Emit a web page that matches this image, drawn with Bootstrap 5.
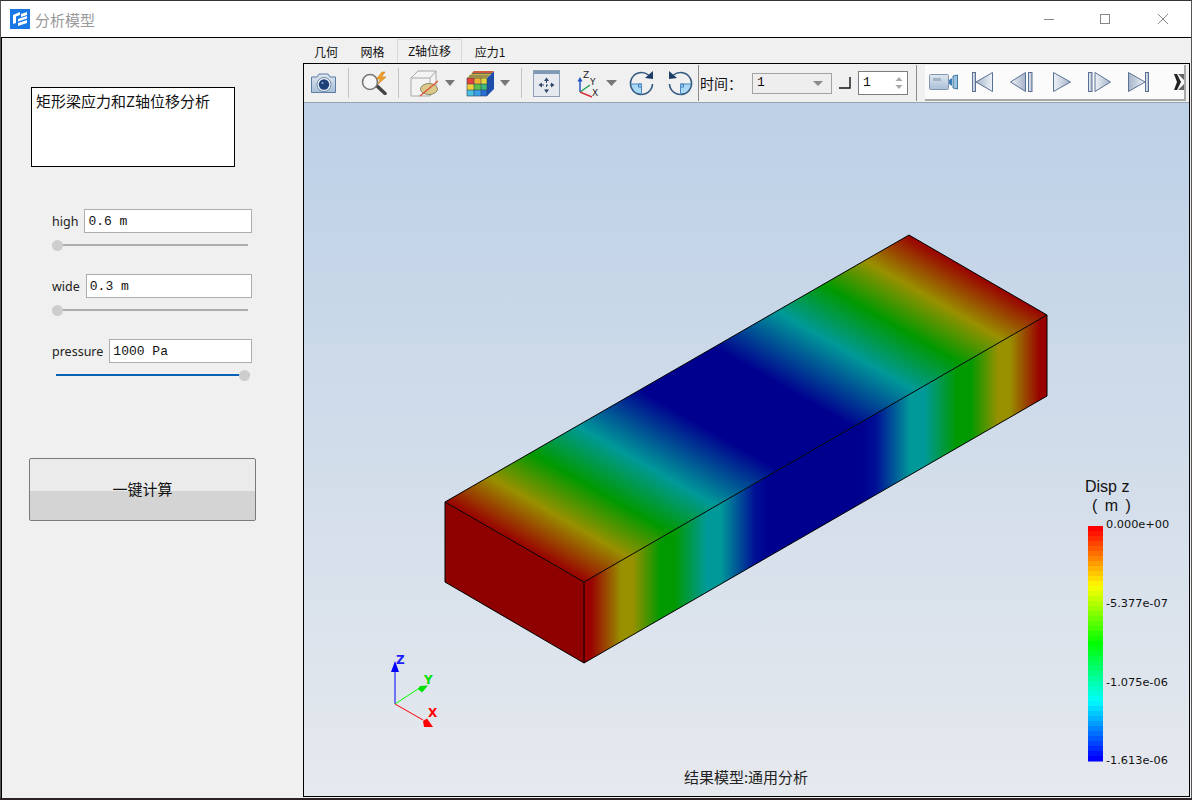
<!DOCTYPE html>
<html lang="zh-CN">
<head>
  <meta charset="UTF-8" />
  <meta name="viewport" content="width=device-width, initial-scale=1.0"/>
  <title>分析模型</title>
  <link rel="stylesheet" href="https://cdn.jsdelivr.net/npm/bootstrap@5.3.0/dist/css/bootstrap.min.css" />
  <style>
    html, body { height: 800px; overflow: hidden; background: #2a2226; }
    body { font-family: "Noto Sans CJK SC", "Liberation Sans", sans-serif; color: #111; }
    .win { height: 798px; background: #f0f0f0; border-top: 1px solid #333; border-left: 1px solid #555; border-right: 1px solid #555; }
    .titlebar { height: 37px; background: #fff; border-bottom: 1px solid #000; flex: none; }
    .app-logo { margin-left: 9px; margin-top: -1px; }
    .app-name { margin-left: 5px; font-size: 15px; color: #999; line-height: 1; }
    .win-btn { width: 10px; height: 10px; }
    .win-min { margin-right: 46px; }
    .win-max { margin-right: 48px; }
    .win-close { margin-right: 23px; }

    .body-wrap { min-height: 0; border-left: 1px solid #000; }
    .side { width: 301px; flex: none; padding-top: 49px; }
    .intro { margin-left: 29px; width: 204px; height: 80px; background: #fff; border: 1px solid #000; padding: 4px 4px; font-size: 15px; line-height: 18px; white-space: nowrap; }
    .param { margin-left: 50px; width: 200px; }
    .param-high { margin-top: 42px; }
    .param-next { margin-top: 23px; }
    .param-row { gap: 6px; }
    .param-label { font-family: "Noto Sans", sans-serif; font-size: 12.5px; color: #222; line-height: 1; margin-top: 2px; }
    .param-input.form-control { height: 24px; border-radius: 0; border: 1px solid #adadad; padding: 1px 3px 0; font-family: "Liberation Mono", monospace; font-size: 13px; box-shadow: none; color: #111; }
    .slider.form-range { display: block; height: 12px; width: 196px; margin-top: 6px; }
    .slider-end.form-range { width: 194px; margin-left: 4px; }
    .slider.form-range::-webkit-slider-runnable-track { height: 2px; background: #adadad; border-radius: 0; }
    .slider-end.form-range::-webkit-slider-runnable-track { background: #0a62b4; }
    .slider.form-range::-webkit-slider-thumb { width: 11px; height: 11px; margin-top: -4.5px; background: #cdcdcd; border-radius: 50%; box-shadow: none; }
    .calc-btn.btn { display: block; margin: 77px 0 0 27px; width: 227px; height: 63px; border: 1px solid #7a7a7a; border-radius: 2px; font-size: 15px; color: #111; background: linear-gradient(#ebebeb 0 52%, #d4d4d4 52%); padding: 0; }

    .tab-strip.nav { height: 25px; flex: none; border: 0; padding-left: 0; font-size: 12px; align-items: flex-end; }
    .tab-strip .nav-link { height: 22px; padding: 2px 0 0; text-align: center; color: #111; border: 0; border-radius: 0; line-height: 18px; }
    .tab-a { width: 46px; }
    .tab-b { width: 47px; }
    .tab-c { width: 65px; margin-left: 1px; }
    .tab-d { width: 56px; }
    .tab-strip .nav-link.active { height: 24px; background: #f0f0f0; border: 1px solid #d9d9d9; border-bottom: 0; color: #111; }
    .viewer { min-height: 0; border: 1px solid #000; margin-right: 1px; margin-bottom: 1px; }
    .toolbar { height: 39px; flex: none; background: #f0f0f0; border-bottom: 1px solid #9aa3ad; }
    .tool-sep { width: 1px; height: 30px; background: #c4c4c4; flex: none; }
    .tool-sep-dark { width: 1px; height: 36px; background: #8c8c8c; flex: none; }
    .tool-text { width: 42px; font-size: 14px; line-height: 1; letter-spacing: 0; }
    .combo { width: 80px; height: 21px; border: 1px solid #a3a3a3; background: #eee; font-family: "Liberation Mono", monospace; font-size: 13px; padding-left: 4px; }
    .spin { width: 50px; height: 24px; border: 1px solid #7d7d7d; background: #fff; font-family: "Liberation Mono", monospace; font-size: 13px; padding-left: 4px; }
    .anim-bar { width: 261px; height: 36px; background: #fbfbfb; border-bottom: 2px solid #a9a9a9; border-right: 2px solid #a9a9a9; margin-top: -1px; }
    .m1 { margin-left: 1px; } .m4 { margin-left: 4px; } .m5 { margin-left: 5px; } .m6 { margin-left: 6px; }
    .m7 { margin-left: 7px; } .m8 { margin-left: 8px; } .m10 { margin-left: 10px; } .m11 { margin-left: 11px; }
    .m12 { margin-left: 12px; } .m14 { margin-left: 14px; } .m15 { margin-left: 15px; } .m17 { margin-left: 17px; }
    .m20 { margin-left: 20px; } .m25 { margin-left: 25px; }
    .stage { min-height: 0; background: linear-gradient(#bcd0e6, #e6e9ee); }
    .stage svg { display: block; }
    .legend-text { font-family: "DejaVu Sans", sans-serif; font-size: 11.3px; fill: #111; }
    .legend-title { font-family: "Liberation Sans", sans-serif; font-size: 16px; fill: #111; }
    .foot-text { font-family: "Noto Sans CJK SC", sans-serif; font-size: 15px; fill: #222; }
    .axis-text { font-family: "DejaVu Sans", sans-serif; font-size: 12px; font-weight: 700; }
    .mini-axis { font-family: "DejaVu Sans", sans-serif; font-size: 9px; fill: #222; }
  </style>
</head>
<body>
  <div class="win d-flex flex-column">
    <div class="titlebar d-flex align-items-center">
      <svg class="app-logo" width="20" height="20" viewBox="0 0 20 20">
        <rect width="20" height="20" fill="#1a78e6"/>
        <path d="M3 6 L10 3 L10 6 L6 7.5 L6 14 L3 15 Z M11 5 L17 3 V6 L11 8 Z M8 10 L17 7 V9.5 L8 12.5 Z M8 14 L17 11 V14 L8 17 Z" fill="#fff"/>
      </svg>
      <span class="app-name">分析模型</span>
      <svg class="win-btn win-min ms-auto" viewBox="0 0 10 10"><path d="M0 5.5H10" stroke="#888" fill="none"/></svg>
      <svg class="win-btn win-max" viewBox="0 0 10 10"><rect x=".5" y=".5" width="9" height="9" stroke="#888" fill="none"/></svg>
      <svg class="win-btn win-close" viewBox="0 0 10 10"><path d="M0 0L10 10M10 0L0 10" stroke="#888" fill="none"/></svg>
    </div>

    <div class="body-wrap d-flex flex-grow-1">
      <div class="side">
        <div class="intro">矩形梁应力和Z轴位移分析</div>

        <div class="param param-high">
          <div class="param-row d-flex align-items-center">
            <label class="param-label">high</label>
            <input class="param-input form-control" value="0.6 m" readonly>
          </div>
          <input type="range" class="slider form-range" min="0" max="100" value="0">
        </div>
        <div class="param param-next">
          <div class="param-row d-flex align-items-center">
            <label class="param-label">wide</label>
            <input class="param-input form-control" value="0.3 m" readonly>
          </div>
          <input type="range" class="slider form-range" min="0" max="100" value="0">
        </div>
        <div class="param param-next">
          <div class="param-row d-flex align-items-center">
            <label class="param-label">pressure</label>
            <input class="param-input form-control" value="1000 Pa" readonly>
          </div>
          <input type="range" class="slider slider-end form-range" min="0" max="100" value="100">
        </div>

        <button type="button" class="calc-btn btn">一键计算</button>
      </div>

      <div class="d-flex flex-column flex-grow-1" style="min-width:0">
        <ul class="tab-strip nav">
          <li class="nav-item"><a class="nav-link tab-a" href="#">几何</a></li>
          <li class="nav-item"><a class="nav-link tab-b" href="#">网格</a></li>
          <li class="nav-item"><a class="nav-link tab-c active" href="#">Z轴位移</a></li>
          <li class="nav-item"><a class="nav-link tab-d" href="#">应力1</a></li>
        </ul>

        <div class="viewer d-flex flex-column flex-grow-1">
          <div class="toolbar d-flex align-items-center">
            <!-- camera -->
            <svg class="m6" width="27" height="22" viewBox="0 0 27 22">
              <defs>
                <linearGradient id="gBody" x1="0" y1="0" x2="0" y2="1"><stop offset="0" stop-color="#dfe7f0"/><stop offset="1" stop-color="#a9bed6"/></linearGradient>
                <linearGradient id="gBtn" x1="0" y1="0" x2="1" y2="0"><stop offset="0" stop-color="#eef2f7"/><stop offset="1" stop-color="#a6b4c8"/></linearGradient>
                <linearGradient id="gBtnR" x1="1" y1="0" x2="0" y2="0"><stop offset="0" stop-color="#eef2f7"/><stop offset="1" stop-color="#a6b4c8"/></linearGradient>
              </defs>
              <path d="M1.5 5 H7 L9 2 H18 L20 5 H25.5 V20.5 H1.5Z" fill="url(#gBody)" stroke="#5b7ca3" stroke-linejoin="round"/>
              <circle cx="14" cy="12.5" r="7" fill="#eef3f8" stroke="#6e8bad"/>
              <circle cx="14" cy="12.5" r="5.2" fill="#1c3f78"/>
              <circle cx="12.5" cy="11" r="1" fill="#8fb0d6"/>
            </svg>
            <div class="tool-sep m11"></div>
            <!-- probe -->
            <svg class="m11" width="28" height="24" viewBox="0 0 28 24">
              <path d="M16 14 L25 22.5" stroke="#444" stroke-width="3.5" stroke-linecap="round"/>
              <circle cx="10" cy="11" r="7.5" fill="#f4f6f8" stroke="#777" stroke-width="1.6"/>
              <path d="M22 1 L16.5 8 H20.5 L18 13 L26 6 H21.5 L25 1Z" fill="#f0a12a" stroke="#c97a10" stroke-width=".6"/>
            </svg>
            <div class="tool-sep m10"></div>
            <!-- hide cube -->
            <svg class="m11" width="30" height="27" viewBox="0 0 30 27">
              <path d="M1 8 L8 1 H26 V19 L20 26 H1Z" fill="#f3f3f3" stroke="#a8a8a8"/>
              <path d="M1 8 H20 V26 M20 8 L26 1" fill="none" stroke="#a8a8a8"/>
              <ellipse cx="19" cy="19" rx="8.5" ry="5.5" fill="#dcc98a" stroke="#8a8a6a"/>
              <path d="M10 26 L28 11" stroke="#d8563a" stroke-width="1.4"/>
            </svg>
            <svg class="m5" width="10" height="6" viewBox="0 0 10 6"><path d="M0 0H10L5 6Z" fill="#777"/></svg>
            <!-- result cube -->
            <svg class="m11" width="29" height="27" viewBox="0 0 29 27">
              <path d="M21 8 L28 1 V19 L21 26Z" fill="#1d4fb0"/>
              <path d="M1 8 L8 1 H28 L21 8Z" fill="#c9b14a"/>
              <path d="M8 1 L6 3 H26 L28 1 Z" fill="#d05a3a"/>
              <rect x="1" y="8" width="7" height="6" fill="#e8413a"/><rect x="8" y="8" width="7" height="6" fill="#f0b030"/><rect x="15" y="8" width="6" height="6" fill="#e8d53a"/>
              <rect x="1" y="14" width="7" height="6" fill="#f0d03a"/><rect x="8" y="14" width="7" height="6" fill="#5cc04a"/><rect x="15" y="14" width="6" height="6" fill="#3cb878"/>
              <rect x="1" y="20" width="7" height="6" fill="#4cc0e0"/><rect x="8" y="20" width="7" height="6" fill="#3c9fe8"/><rect x="15" y="20" width="6" height="6" fill="#2a6fd8"/>
              <path d="M1 8V26H21V8H1ZM8 8V26M15 8V26M1 14H21M1 20H21M21 14L28 7M21 20L28 13M3 6H23M6 3.5H26" fill="none" stroke="#2b3f5c" stroke-width=".6"/>
            </svg>
            <svg class="m5" width="10" height="6" viewBox="0 0 10 6"><path d="M0 0H10L5 6Z" fill="#777"/></svg>
            <div class="tool-sep m11"></div>
            <!-- fit view -->
            <svg class="m11" width="27" height="27" viewBox="0 0 27 27">
              <rect x=".5" y=".5" width="26" height="26" fill="#e6eaf0" stroke="#8da0b8"/>
              <rect x="1" y="1" width="25" height="3" fill="#7f98b6"/>
              <path d="M13.5 7.5 L16 11 H11Z M13.5 23 L16 19.5 H11Z M5.5 15 L9 12.5 V17.5Z M21.5 15 L18 12.5 V17.5Z" fill="#2e4668"/>
              <path d="M13.5 11V19.5M9 15H18" stroke="#2e4668" stroke-dasharray="2 2"/>
            </svg>
            <!-- axes -->
            <svg class="m15" width="25" height="33" viewBox="0 -3 25 33">
              <path d="M5 22 V11" stroke="#1a4fc0" stroke-width="1.4"/><path d="M5 7L2.5 11.500H7.500Z" fill="#1a4fc0"/>
              <path d="M5 22 L15 15" stroke="#18a050" stroke-width="1.4"/>
              <path d="M5 22 L17 27" stroke="#d8303a" stroke-width="1.4"/>
              <text class="mini-axis" x="8" y="8">Z</text>
              <text class="mini-axis" x="15" y="15">Y</text>
              <text class="mini-axis" x="17" y="26">X</text>
            </svg>
            <svg class="m6" width="11" height="6" viewBox="0 0 11 6"><path d="M0 0H11L5.500 6Z" fill="#777"/></svg>
            <!-- rotate cw -->
            <svg class="m12" width="25" height="26" viewBox="0 0 25 26">
              <path d="M1.500 14 A11 11 0 0 0 12.500 25 V14Z" fill="#a8d8f4"/>
              <path d="M12.500 14 h-3 v3 h3" fill="none" stroke="#3a7bb8"/>
              <path d="M19.500 5 A11 11 0 1 0 23.500 14" fill="none" stroke="#33597f" stroke-width="1.6"/>
              <path d="M1.500 14H12.500V25" fill="none" stroke="#4a88bd"/>
              <path d="M24 1 L24 9 L16 8Z" fill="#1c3d68"/>
            </svg>
            <!-- rotate ccw -->
            <svg class="m14" width="25" height="26" viewBox="0 0 25 26">
              <path d="M23.500 14 A11 11 0 0 1 12.500 25 V14Z" fill="#a8d8f4"/>
              <path d="M12.500 14 h3 v3 h-3" fill="none" stroke="#3a7bb8"/>
              <path d="M5.500 5 A11 11 0 1 1 1.500 14" fill="none" stroke="#33597f" stroke-width="1.6"/>
              <path d="M23.500 14H12.500V25" fill="none" stroke="#4a88bd"/>
              <path d="M1 1 L1 9 L9 8Z" fill="#1c3d68"/>
            </svg>
            <div class="tool-sep-dark m5"></div>
            <span class="tool-text m1">时间：</span>
            <div class="combo m10 d-flex align-items-center justify-content-between">
              <span>1</span>
              <svg class="me-2" width="10" height="5" viewBox="0 0 10 5"><path d="M0 0H10L5 5Z" fill="#8a8a8a"/></svg>
            </div>
            <svg class="m7" width="12" height="12" viewBox="0 0 12 12"><path d="M0 11H11V0" fill="none" stroke="#111" stroke-width="1.4"/></svg>
            <div class="spin m7 d-flex align-items-center justify-content-between">
              <span>1</span>
              <svg class="me-1" width="8" height="12" viewBox="0 0 8 12"><path d="M4 0L7.500 4H.5ZM4 12L.5 8H7.500Z" fill="#a8a8a8"/></svg>
            </div>
            <div class="tool-sep-dark m8"></div>
            <!-- animation controls -->
            <div class="anim-bar m8 d-flex align-items-center">
              <svg class="m4" width="29" height="16" viewBox="0 0 29 16">
                <rect x=".5" y=".5" width="19" height="15" rx="1" fill="url(#gBody)" stroke="#8296ae"/>
                <rect x="4" y="4" width="8" height="3" fill="#a3b2c4"/>
                <path d="M20 6 L23 4 V12 L20 10Z" fill="#3a7db8"/>
                <path d="M24 2 L28.500 1 V15 L24 14Z" fill="#9cc4e0" stroke="#1f5e8f" stroke-width=".8"/>
              </svg>
              <svg class="m14" width="21" height="20" viewBox="0 0 21 20">
                <rect x=".5" y=".5" width="3" height="19" fill="url(#gBtn)" stroke="#5a7196"/>
                <path d="M20.500 .5 V19.500 L4 10Z" fill="url(#gBtnR)" stroke="#5a7196"/>
              </svg>
              <svg class="m17" width="23" height="20" viewBox="0 0 23 20">
                <path d="M15.500 .5 V19.500 L.5 10Z" fill="url(#gBtn)" stroke="#5a7196"/>
                <rect x="18.500" y=".5" width="3.500" height="19" fill="url(#gBtn)" stroke="#5a7196"/>
              </svg>
              <svg class="m20" width="18" height="20" viewBox="0 0 18 20">
                <path d="M.5 .5 V19.500 L17.500 10Z" fill="url(#gBtn)" stroke="#5a7196"/>
              </svg>
              <svg class="m17" width="23" height="20" viewBox="0 0 23 20">
                <rect x=".5" y=".5" width="3.500" height="19" fill="url(#gBtn)" stroke="#5a7196"/>
                <path d="M7 .5 V19.500 L22.500 10Z" fill="url(#gBtn)" stroke="#5a7196"/>
              </svg>
              <svg class="m17" width="21" height="20" viewBox="0 0 21 20">
                <path d="M.5 .5 V19.500 L17 10Z" fill="url(#gBtnR)" stroke="#5a7196"/>
                <rect x="17.500" y=".5" width="3" height="19" fill="url(#gBtn)" stroke="#5a7196"/>
              </svg>
              <svg class="m25" width="10" height="18" viewBox="0 0 10 18">
                <path d="M0 1H3L7 9L3 17H0L3 9Z" fill="#222"/>
                <path d="M4 1H10V7ZM4 17H10V11Z" fill="#666"/>
              </svg>
            </div>
          </div>

          <div class="stage flex-grow-1">
            <svg id="scene" width="884" height="692" viewBox="304 103 884 692">
              <defs>
                <linearGradient id="beamTop" gradientUnits="userSpaceOnUse" x1="0" y1="0" x2="1" y2="0" gradientTransform="matrix(464 -267 139 80 445 502)">
                  <stop offset="0" stop-color="#990000"/>
                  <stop offset=".095" stop-color="#999000"/>
                  <stop offset=".185" stop-color="#009900"/>
                  <stop offset=".285" stop-color="#009999"/>
                  <stop offset=".42" stop-color="#00008f"/>
                  <stop offset=".58" stop-color="#00008f"/>
                  <stop offset=".715" stop-color="#009999"/>
                  <stop offset=".815" stop-color="#009900"/>
                  <stop offset=".905" stop-color="#999000"/>
                  <stop offset="1" stop-color="#990000"/>
                </linearGradient>
                <linearGradient id="beamSide" gradientUnits="userSpaceOnUse" x1="0" y1="0" x2="1" y2="0" gradientTransform="matrix(463 -267 0 81 584 582)">
                  <stop offset="0" stop-color="#990000"/>
                  <stop offset=".015" stop-color="#990000"/>
                  <stop offset=".08" stop-color="#999000"/>
                  <stop offset=".105" stop-color="#999000"/>
                  <stop offset=".165" stop-color="#009900"/>
                  <stop offset=".195" stop-color="#009900"/>
                  <stop offset=".265" stop-color="#009999"/>
                  <stop offset=".295" stop-color="#009999"/>
                  <stop offset=".37" stop-color="#000f96"/>
                  <stop offset=".4" stop-color="#00008f"/>
                  <stop offset=".6" stop-color="#00008f"/>
                  <stop offset=".63" stop-color="#000f96"/>
                  <stop offset=".705" stop-color="#009999"/>
                  <stop offset=".735" stop-color="#009999"/>
                  <stop offset=".805" stop-color="#009900"/>
                  <stop offset=".835" stop-color="#009900"/>
                  <stop offset=".895" stop-color="#999000"/>
                  <stop offset=".92" stop-color="#999000"/>
                  <stop offset=".985" stop-color="#990000"/>
                  <stop offset="1" stop-color="#990000"/>
                </linearGradient>
              </defs>

              <polygon points="445,502 909,235 1047,315 584,582" fill="url(#beamTop)"/>
              <polygon points="584,582 1047,315 1047,396 584,663" fill="url(#beamSide)"/>
              <polygon points="445,502 584,582 584,663 445,582" fill="#8f0000"/>
              <path d="M445 502 L909 235 L1047 315 V396 L584 663 L445 582Z M445 502 L584 582 L1047 315 M584 582 V663" fill="none" stroke="#000" stroke-width="1"/>

              <!-- triad -->
              <path d="M395 704 V668" stroke="#0000ff" stroke-width="1"/>
              <path d="M395 661 L399 672 H391Z" fill="#0000ff"/>
              <path d="M395 704 L421 687" stroke="#00ff00" stroke-width="1"/>
              <path d="M428 685.500 L422 692.500 L418 689 L420 686Z" fill="#00e000"/>
              <path d="M395 704 L423 720" stroke="#ff0000" stroke-width="1"/>
              <path d="M433 727 H424 L423 721 L427 718.500Z" fill="#ff0000"/>
              <text class="axis-text" x="396" y="664" fill="#2020ff">Z</text>
              <text class="axis-text" x="424" y="684" fill="#00e000">Y</text>
              <text class="axis-text" x="428" y="717" fill="#ff0000">X</text>

              <!-- legend -->
              <text class="legend-title" x="1085" y="492">Disp z</text>
              <text class="legend-title" x="1092" y="511" word-spacing="3">( m )</text>
              <g id="legendBar"></g>
              <text class="legend-text" x="1106" y="528">0.000e+00</text>
              <text class="legend-text" x="1106" y="607">-5.377e-07</text>
              <text class="legend-text" x="1106" y="686">-1.075e-06</text>
              <text class="legend-text" x="1106" y="764">-1.613e-06</text>

              <text class="foot-text" x="746" y="783" text-anchor="middle">结果模型:通用分析</text>
            </svg>
          </div>
        </div>
      </div>
    </div>
  </div>

  <script src="https://cdn.jsdelivr.net/npm/bootstrap@5.3.0/dist/js/bootstrap.bundle.min.js"></script>
  <script>
    // stepped colour bar for the legend
    const bar = document.getElementById("legendBar");
    const steps = 47;
    for (let i = 0; i < steps; i++) {
      const r = document.createElementNS("http://www.w3.org/2000/svg", "rect");
      r.setAttribute("x", 1088);
      r.setAttribute("y", 526 + i * 5);
      r.setAttribute("width", 15);
      r.setAttribute("height", 5.5);
      r.setAttribute("fill", "hsl(" + Math.round(240 * i / (steps - 1)) + ",100%,50%)");
      bar.appendChild(r);
    }
  </script>
</body>
</html>
